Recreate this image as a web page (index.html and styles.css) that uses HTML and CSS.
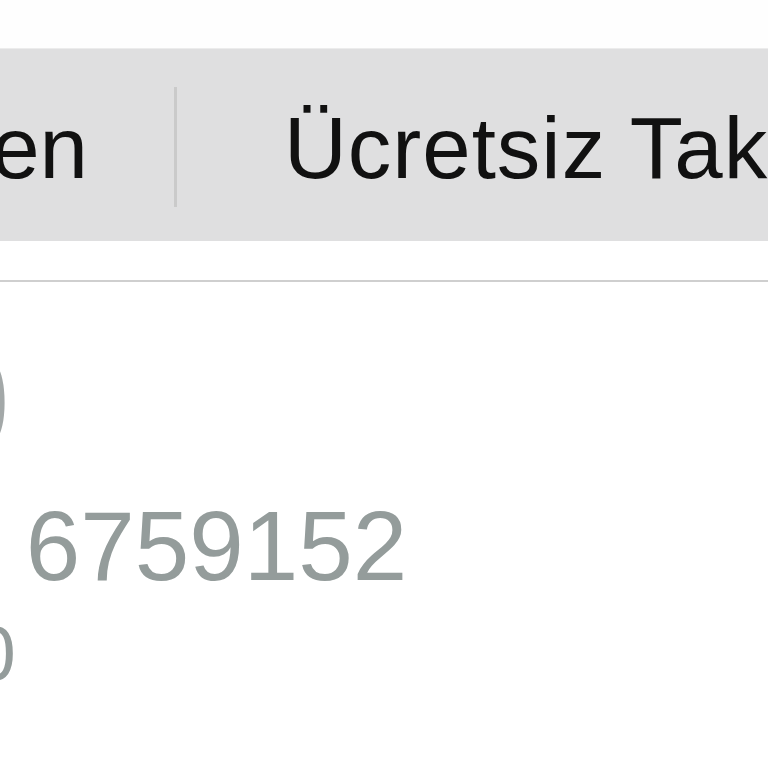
FILE: index.html
```html
<!DOCTYPE html>
<html lang="tr">
<head>
<meta charset="utf-8">
<link rel="stylesheet" href="styles.css">
</head>
<body>
<div class="page">
  <div class="top"></div>
  <div class="tabs">
    <div class="tab tab-first"><span>Gelen</span></div>
    <div class="divider"></div>
    <div class="tab tab-second">Ücretsiz Takip</div>
  </div>
  <div class="gap"></div>
  <div class="rule"></div>
  <div class="content">
    <div class="line line-a"><span>0</span></div>
    <div class="line line-b"><span class="pre">212 </span>6759152</div>
    <div class="line line-c"><span>0</span></div>
  </div>
</div>
</body>
</html>
```

FILE: styles.css
```css
html, body {
  margin: 0;
  padding: 0;
  background: #ffffff;
}
.page {
  width: 768px;
  height: 768px;
  overflow: hidden;
  font-family: "Liberation Sans", Arial, sans-serif;
}
.top {
  height: 48px;
  background: #fefefe;
  border-bottom: 1px solid #ececec;
}
.tabs {
  height: 192px;
  background: #dfdfe0;
  display: flex;
  align-items: center;
  white-space: nowrap;
  color: #111111;
  font-size: 87px;
}
.tabs > * {
  flex-shrink: 0;
}
.tab {
  line-height: 1;
}
.tab-first {
  width: 88px;
  overflow: hidden;
  display: flex;
  justify-content: flex-end;
  padding-top: 4px;
}
.divider {
  width: 3px;
  height: 120px;
  margin-left: 86px;
  margin-top: 4px;
  background: #cacaca;
}
.tab-second {
  margin-left: 107px;
  padding-top: 4px;
  letter-spacing: 1px;
}
.gap {
  height: 39px;
}
.rule {
  height: 2px;
  background: #cfcfcf;
}
.content {
  color: #949c9b;
  white-space: nowrap;
}
.line {
  line-height: 1;
}
.line-a {
  font-size: 150px;
  margin-top: 46px;
  margin-left: -73px;
  color: #a3a8a8;
}
.line-b {
  font-size: 98px;
  margin-top: 19px;
  margin-left: -165px;
}
.line-c {
  font-size: 77px;
  margin-top: 20px;
  margin-left: -27px;
}
```
